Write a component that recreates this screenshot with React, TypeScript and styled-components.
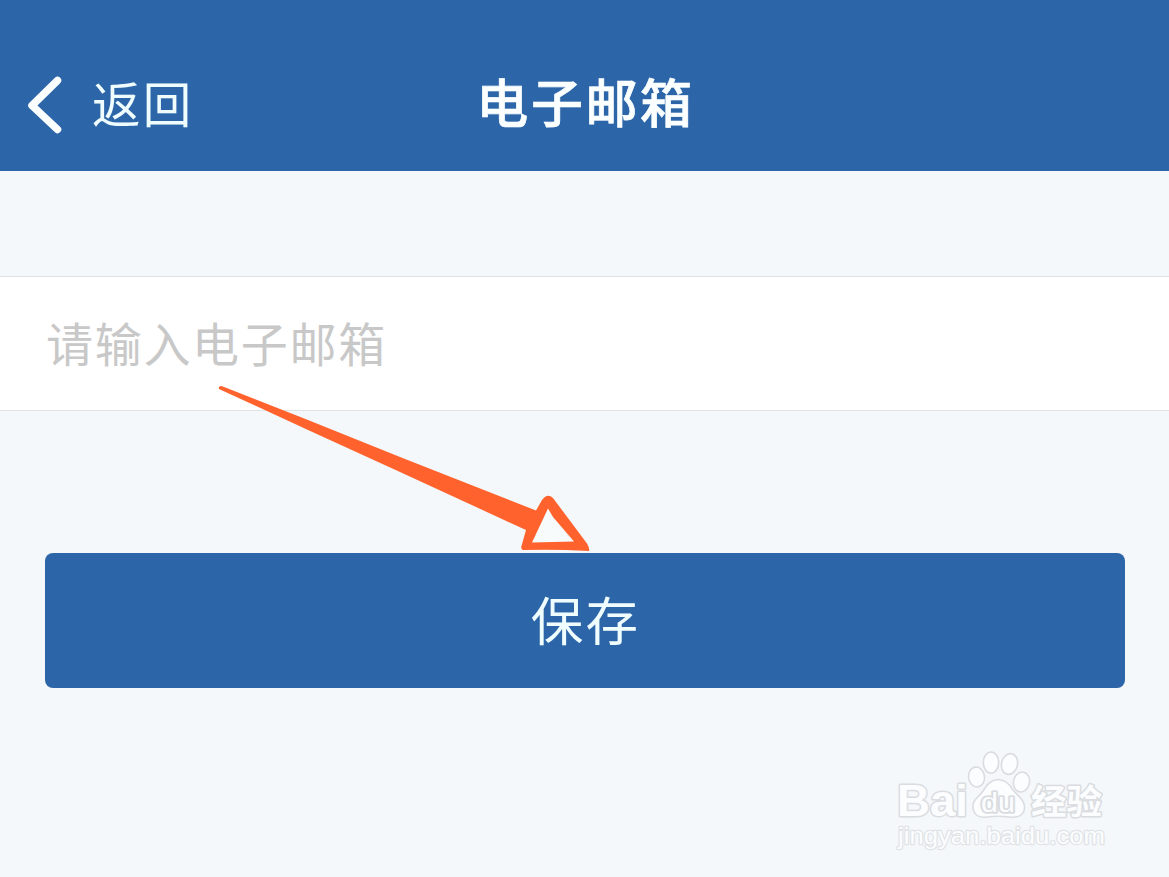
import React, { useState } from "react";
import styled, { createGlobalStyle } from "styled-components";

const GlobalStyle = createGlobalStyle`
  * {
    box-sizing: border-box;
  }
  body {
    margin: 0;
    background-color: #f4f8fa;
    font-family: "Noto Sans CJK SC", sans-serif;
  }
`;

const Container = styled.div`
  position: relative;
  min-height: 877px;
  overflow: hidden;
  background-color: #f4f8fa;
`;

const Header = styled.header`
  display: grid;
  grid-template-columns: 1fr auto 1fr;
  align-items: center;
  height: 171px;
  padding: 38px 26px 0;
  color: #fbffff;
  background-color: #2c65a8;
`;

const BackBtn = styled.button`
  display: flex;
  align-items: center;
  gap: 28px;
  padding: 0;
  border: 0;
  color: inherit;
  background: none;
  font-family: inherit;
`;

const BackIcon = styled.svg`
  width: 38px;
  height: 60px;
`;

const BackText = styled.span`
  padding-bottom: 5px;
  color: #effdff;
  font-size: 48.5px;
  font-weight: 400;
  line-height: 60px;
  letter-spacing: 2.3px;
`;

const Title = styled.h1`
  margin: 0;
  padding: 0 0 7px 2px;
  font-size: 52px;
  font-weight: 500;
  line-height: 60px;
  letter-spacing: 2.6px;
  -webkit-text-stroke: 0.7px currentColor;
`;

const Form = styled.form`
  padding-top: 105px;
`;

const Field = styled.div`
  height: 135px;
  padding: 0 45px;
  border-top: 1px solid #dfe3e6;
  border-bottom: 1px solid #dfe3e6;
  background-color: #fff;
`;

const Input = styled.input`
  width: 100%;
  height: 100%;
  padding: 0 0 4px 1px;
  border: 0;
  outline: 0;
  background: none;
  font-family: inherit;
  font-size: 47px;
  font-weight: 400;
  letter-spacing: 1.7px;
  &::placeholder {
    color: #c8c8c8;
    opacity: 1;
  }
`;

const SaveBtn = styled.button`
  display: block;
  width: calc(100% - 89px);
  height: 135px;
  margin: 142px 44px 0 45px;
  padding: 0 0 5px 1px;
  border: 0;
  border-radius: 8px;
  color: #effdff;
  background-color: #2c65a8;
  font-family: inherit;
  font-size: 52.5px;
  font-weight: 400;
  line-height: 130px;
  letter-spacing: 2.2px;
`;

const Arrow = styled.svg`
  position: absolute;
  left: 210px;
  top: 380px;
  width: 390px;
  height: 180px;
  pointer-events: none;
`;

const Watermark = styled.svg`
  position: absolute;
  left: 890px;
  top: 745px;
  width: 225px;
  height: 112px;
  pointer-events: none;
`;

// toes of the paw: cx, cy, rx, ry, rotation
const toes = [
  [86.5, 32, 8, 10, -8],
  [101, 17.5, 7.7, 10.5, 0],
  [119.5, 19, 8, 10.5, 12],
  [131.5, 37, 8, 10, 12],
];

const App = () => {
  const [email, setEmail] = useState<string>("");

  return (
    <Container>
      <GlobalStyle />
      <Header>
        <BackBtn type="button">
          <BackIcon viewBox="0 0 38 60" fill="none">
            <path
              d="M31.5 5.5L6 30.5L31.5 54.5"
              stroke="currentColor"
              strokeWidth="7.5"
              strokeLinecap="round"
              strokeLinejoin="round"
            />
          </BackIcon>
          <BackText>返回</BackText>
        </BackBtn>
        <Title>电子邮箱</Title>
      </Header>
      <Form onSubmit={(e) => e.preventDefault()}>
        <Field>
          <Input
            value={email}
            placeholder="请输入电子邮箱"
            onChange={(e) => setEmail(e.target.value)}
          />
        </Field>
        <SaveBtn type="submit">保存</SaveBtn>
      </Form>
      <Arrow viewBox="210 380 390 180">
        <path
          d="M219 389Q218 386 221.5 386L308 420L400 457L536 510.5L542 500Q547.500 492.500 553 498L587 543.500Q590 549 589 551Q555 549 523 550Q520.500 549 521.500 546L526 530L400 472L308 430L219 389Z"
          fill="#ff622d"
        />
        <path d="M548 508.500L532 542.500L574 541.500L553 517Z" fill="#f7fbfb" />
      </Arrow>
      <Watermark
        viewBox="0 0 225 112"
        fill="#fbfdff"
        stroke="#dadcdf"
        strokeWidth="1.6"
        strokeLinejoin="round"
      >
        {toes.map(([cx, cy, rx, ry, angle], index) => (
          <ellipse
            key={`toe${index}`}
            cx={cx}
            cy={cy}
            rx={rx}
            ry={ry}
            transform={`rotate(${angle} ${cx} ${cy})`}
          />
        ))}
        <path d="M108 34.500C101 34.500 97 39 93 46C89 52 82 55 83 63C84 71 90 73 97 72C104 71 112 71 119 72C127 73 134 71 134.500 63C135 55 128 51 123 45C119 38 115 34.500 108 34.500Z" />
        <text
          x="7"
          y="71"
          fontSize="45"
          fontFamily="Liberation Sans, sans-serif"
          fontWeight="700"
          strokeWidth="3"
          paintOrder="stroke"
          textLength="71"
          lengthAdjust="spacingAndGlyphs"
        >
          Bai
        </text>
        <text
          x="91"
          y="66.5"
          fontSize="27"
          fontFamily="Liberation Sans, sans-serif"
          strokeWidth="3.6"
          paintOrder="stroke"
          textLength="34"
          lengthAdjust="spacingAndGlyphs"
        >
          du
        </text>
        <text
          x="141"
          y="68.5"
          fontSize="34.5"
          fontFamily="Noto Sans CJK SC, sans-serif"
          fontWeight="700"
          strokeWidth="3"
          paintOrder="stroke"
          textLength="71"
          lengthAdjust="spacingAndGlyphs"
        >
          经验
        </text>
        <text
          x="8"
          y="99"
          fontSize="24.5"
          fontFamily="Liberation Sans, sans-serif"
          stroke="#e1e3e6"
          strokeWidth="2.4"
          paintOrder="stroke"
          textLength="207"
          lengthAdjust="spacingAndGlyphs"
        >
          jingyan.baidu.com
        </text>
      </Watermark>
    </Container>
  );
};

export default App;
